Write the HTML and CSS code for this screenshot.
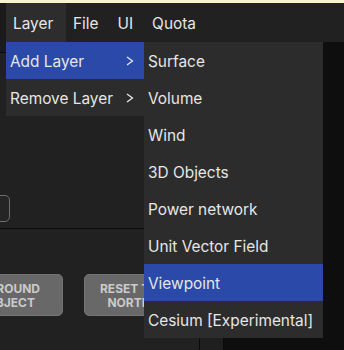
FILE: index.html
```html
<!DOCTYPE html>
<html lang="en">
<head>
<meta charset="utf-8">
<title>Layer menu</title>
<link rel="stylesheet" href="styles.css">
</head>
<body>
<div class="topline"></div>
<header class="header">
  <div class="edge"></div>
  <nav class="menubar">
    <div class="menu-item open">Layer
      <div class="dropdown">
        <div class="dd-item active">
          <span>Add Layer</span>
          <svg class="chev" width="8" height="10" viewBox="0 0 8 10"><polyline points="1,1 6.5,5 1,9" fill="none" stroke="#e8e8e8" stroke-width="1.3"/></svg>
          <div class="submenu">
            <div class="sub-item">Surface</div>
            <div class="sub-item">Volume</div>
            <div class="sub-item">Wind</div>
            <div class="sub-item">3D Objects</div>
            <div class="sub-item">Power network</div>
            <div class="sub-item">Unit Vector Field</div>
            <div class="sub-item active">Viewpoint</div>
            <div class="sub-item">Cesium [Experimental]</div>
          </div>
        </div>
        <div class="dd-item">
          <span>Remove Layer</span>
          <svg class="chev" width="8" height="10" viewBox="0 0 8 10"><polyline points="1,1 6.5,5 1,9" fill="none" stroke="#e8e8e8" stroke-width="1.3"/></svg>
        </div>
      </div>
    </div>
    <div class="menu-item">File</div>
    <div class="menu-item">UI</div>
    <div class="menu-item">Quota</div>
  </nav>
</header>
<main class="workspace">
  <section class="panel">
    <div class="panel-head"></div>
    <div class="field-row"><div class="field"></div></div>
    <div class="sep"></div>
    <div class="buttons">
      <button class="btn btn-orbit"><span class="l1">AROUND</span><span class="l2">OBJECT</span></button>
      <button class="btn">RESET TO NORTH</button>
    </div>
  </section>
  <div class="strip"></div>
  <div class="viewport"></div>
</main>
</body>
</html>
```

FILE: styles.css
```css
* { box-sizing: border-box; }
html, body {
  margin: 0;
  padding: 0;
  width: 344px;
  height: 350px;
  overflow: hidden;
  background: #212121;
  font-family: Inter, "Noto Sans", sans-serif;
  color: #e6e6e6;
}
.topline {
  height: 3px;
  background: #f7f5cb;
}
.header {
  display: flex;
  height: 39px;
}
.edge {
  width: 6px;
  background: #1b1b1b;
}
.menubar {
  flex: 1;
  display: flex;
  background: #212121;
  font-size: 15.4px;
}
.menu-item {
  position: relative;
  display: flex;
  align-items: center;
  padding: 1px 12px 0 7px;
  height: 39px;
}
.menu-item.open {
  background: #2d2d2d;
  width: 60px;
}
.dropdown {
  position: absolute;
  left: 0;
  top: 39px;
  width: 138px;
  background: #2c2c2c;
  z-index: 10;
}
.dd-item {
  position: relative;
  display: flex;
  align-items: center;
  justify-content: space-between;
  height: 37px;
  padding: 1px 10px 0 4px;
}
.dd-item.active {
  background: #2b49a9;
}
.chev {
  display: block;
}
.submenu {
  position: absolute;
  left: 138px;
  top: 0;
  width: 179px;
  background: #2c2c2c;
}
.sub-item {
  display: flex;
  align-items: center;
  height: 37px;
  padding: 1px 4px 0;
  white-space: nowrap;
}
.sub-item.active {
  background: #2b49a9;
}
.workspace {
  display: flex;
  height: 308px;
}
.panel {
  width: 200px;
  border-right: 1px solid #0b0b0b;
  background: #212121;
  overflow: hidden;
}
.panel-head {
  height: 11px;
  background: #1b1b1b;
  border-bottom: 1px solid #0b0b0b;
}
.field-row {
  margin-top: 142px;
  display: flex;
}
.field {
  margin-left: -90px;
  width: 100px;
  height: 27px;
  border: 1px solid #6e6e6e;
  border-radius: 5px;
  background: #252525;
}
.sep {
  margin-top: 6px;
  height: 1px;
  background: #0b0b0b;
}
.buttons {
  display: flex;
  gap: 21px;
  margin-top: 45px;
  margin-left: -27px;
}
.btn {
  flex: none;
  width: 90px;
  height: 42px;
  padding: 1px 4px 0;
  border: 1px solid #747474;
  border-radius: 5px;
  background: #686868;
  color: #cbcbcb;
  font-family: Inter, "Noto Sans", sans-serif;
  font-weight: 700;
  font-size: 12px;
  line-height: 14px;
  text-align: center;
}
.btn-orbit {
  text-align: right;
  padding: 1px 22px 0 0;
}
.btn-orbit span {
  display: block;
}
.btn-orbit .l2 {
  margin-right: 5px;
}
.strip {
  width: 24px;
  border-right: 1px solid #0b0b0b;
  background: #1f1f1f;
}
.viewport {
  flex: 1;
  background: #0e0e0e;
}
```
